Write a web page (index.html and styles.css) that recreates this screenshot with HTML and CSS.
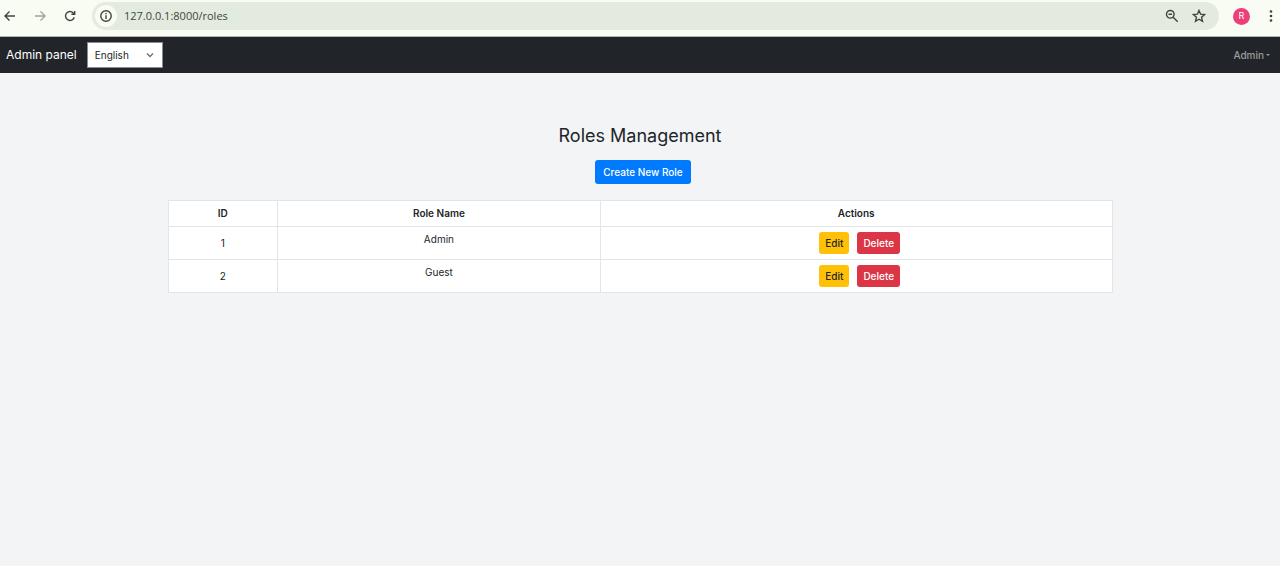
FILE: index.html
```html
<!DOCTYPE html>
<html lang="en">
<head>
<meta charset="utf-8">
<meta name="viewport" content="width=device-width, initial-scale=1">
<title>Roles Management</title>
<link rel="stylesheet" href="styles.css">
</head>
<body>
<div class="browser">
  <div class="browser-nav">
    <button class="icon-button" type="button" aria-label="Back"><svg width="14" height="14" viewBox="0 0 14 14"><path d="M12 7H2M6.500 2.500L2 7l4.500 4.500"/></svg></button>
    <button class="icon-button muted" type="button" aria-label="Forward"><svg width="14" height="14" viewBox="0 0 14 14"><path d="M2 7h10M7.500 2.500L12 7l-4.500 4.500"/></svg></button>
    <button class="icon-button" type="button" aria-label="Reload"><svg width="14" height="14" viewBox="0 0 14 14"><path d="M11.300 8.300A4.500 4.500 0 1 1 10.200 3.800L11.500 5M11.700 2v3.300H8.400"/></svg></button>
  </div>
  <div class="address-bar">
    <button class="site-info" type="button" aria-label="Site information"><svg width="14" height="14" viewBox="0 0 14 14"><circle cx="7" cy="7" r="5.200"/><path d="M7 6.300v3.700M7 3.900v1.300"/></svg></button>
    <input class="url" type="text" aria-label="Address" value="127.0.0.1:8000/roles">
    <button class="icon-button tool" type="button" aria-label="Zoom"><svg width="14" height="14" viewBox="0 0 14 14"><circle cx="5.300" cy="5.300" r="3.800"/><path d="M8.200 8.200l4.500 4.500M3.500 5.300h3.600"/></svg></button>
    <button class="icon-button tool" type="button" aria-label="Bookmark"><svg width="14" height="14" viewBox="0 0 14 14"><path d="M7 1.500l1.600 3.700 4 .4-3 2.700.9 4L7 10.200l-3.500 2.100.9-4-3-2.700 4-.4z"/></svg></button>
  </div>
  <button class="profile" type="button" aria-label="Profile">R</button>
  <button class="icon-button dots" type="button" aria-label="Menu"><svg width="4" height="14" viewBox="0 0 4 14"><circle cx="2" cy="2.500" r="1.300"/><circle cx="2" cy="7" r="1.300"/><circle cx="2" cy="11.500" r="1.300"/></svg></button>
</div>
<nav class="navbar">
  <a class="brand" href="#">Admin panel</a>
  <div class="language">
    <select class="language-select" aria-label="Language"><option>English</option></select>
    <svg class="chevron" width="8" height="8" viewBox="0 0 8 8"><path d="M1 2.500l3 3 3-3"/></svg>
  </div>
  <button class="account" type="button">Admin<span class="caret"></span></button>
</nav>
<main class="content">
  <h1 class="title">Roles Management</h1>
  <a class="button create" href="#">Create New Role</a>
  <table class="roles">
    <colgroup><col class="col-id"><col class="col-name"><col></colgroup>
    <thead><tr><th>ID</th><th>Role Name</th><th>Actions</th></tr></thead>
    <tbody>
      <tr><td>1</td><td class="name">Admin</td><td><div class="actions"><a class="button edit" href="#">Edit</a><button class="button delete" type="button">Delete</button></div></td></tr>
      <tr><td>2</td><td class="name">Guest</td><td><div class="actions"><a class="button edit" href="#">Edit</a><button class="button delete" type="button">Delete</button></div></td></tr>
    </tbody>
  </table>
</main>
</body>
</html>
```
FILE: styles.css
```css
* {
  box-sizing: border-box;
}

body {
  margin: 0;
  background: #f3f4f6;
  color: #212529;
  font-family: Inter, "Liberation Sans", sans-serif;
  font-size: 10px;
  line-height: 16px;
}

button, input, select {
  margin: 0;
  padding: 0;
  border: 0;
  background: none;
  color: inherit;
  font: inherit;
}

a {
  color: inherit;
  text-decoration: none;
}

svg {
  display: block;
  fill: none;
  stroke: currentColor;
  stroke-width: 1.4;
}

.browser {
  display: flex;
  align-items: center;
  height: 37px;
  padding: 0 7px 4px 3px;
  border-bottom: 1px solid #b5b8b2;
  background: #f9fcf3;
  color: #3f453e;
}

.browser-nav {
  display: flex;
  gap: 16px;
  margin-right: 15px;
}

.muted {
  color: #a0a59d;
}

.address-bar {
  display: flex;
  flex: 1;
  align-items: center;
  gap: 13px;
  height: 28px;
  padding: 0 13px 0 3px;
  border-radius: 14px;
  background: #e3ebdf;
}

.site-info {
  display: grid;
  place-items: center;
  width: 22px;
  height: 22px;
  border-radius: 50%;
  background: #f9fcf3;
}

.url {
  flex: 1;
  min-width: 0;
  margin-left: -6px;
  font-family: "Open Sans", sans-serif;
  font-size: 11px;
}

.profile {
  width: 17px;
  height: 17px;
  margin: 0 19px 0 14px;
  border-radius: 50%;
  background: #ec407a;
  color: #fff;
  font-size: 9px;
}

.dots svg {
  fill: currentColor;
  stroke: none;
}

.navbar {
  display: flex;
  align-items: center;
  height: 36px;
  padding: 0 10px 0 6px;
  background: #212529;
}

.brand {
  margin-right: 10px;
  color: #fff;
  font-size: 12px;
}

.language {
  display: grid;
  align-items: center;
  width: 76px;
}

.language-select {
  grid-area: 1 / 1;
  width: 100%;
  height: 26px;
  padding-left: 7px;
  border: 1px solid #878c98;
  border-radius: 0;
  background: #fff;
  appearance: none;
}

.chevron {
  grid-area: 1 / 1;
  justify-self: end;
  margin-right: 9px;
  color: #6b7280;
  pointer-events: none;
}

.account {
  display: flex;
  align-items: center;
  gap: 2px;
  margin-left: auto;
  color: #9b9d9f;
  font-weight: 500;
}

.caret {
  border: 2px solid transparent;
  border-top-color: currentColor;
  border-bottom: 0;
}

.content {
  display: flex;
  flex-direction: column;
  align-items: center;
  max-width: 977px;
  margin: 0 auto;
  padding: 49px 16px;
}

.title {
  margin: 0 0 10px;
  font-size: 18px;
  font-weight: 400;
  line-height: 28px;
}

.button {
  padding: 3px 6px;
  border-radius: 3px;
  font-weight: 500;
}

.create {
  margin: 0 0 16px 6px;
  padding: 4px 8px;
  background: #007bff;
  color: #fff;
}

.roles {
  width: 100%;
  border-collapse: collapse;
  table-layout: fixed;
  background: #fff;
  text-align: center;
}

.col-id {
  width: 11.6%;
}

.col-name {
  width: 34.2%;
}

.roles th,
.roles td {
  padding: 5px;
  border: 1px solid #e2e4e8;
}

.roles th {
  font-weight: 600;
  line-height: 15px;
}

.roles .name {
  padding-top: 4px;
  vertical-align: top;
}

.actions {
  display: flex;
  justify-content: center;
  gap: 8px;
  padding-left: 7px;
}

.edit {
  background: #ffc107;
  color: #212529;
}

.delete {
  background: #dc3545;
  color: #fff;
}
```
